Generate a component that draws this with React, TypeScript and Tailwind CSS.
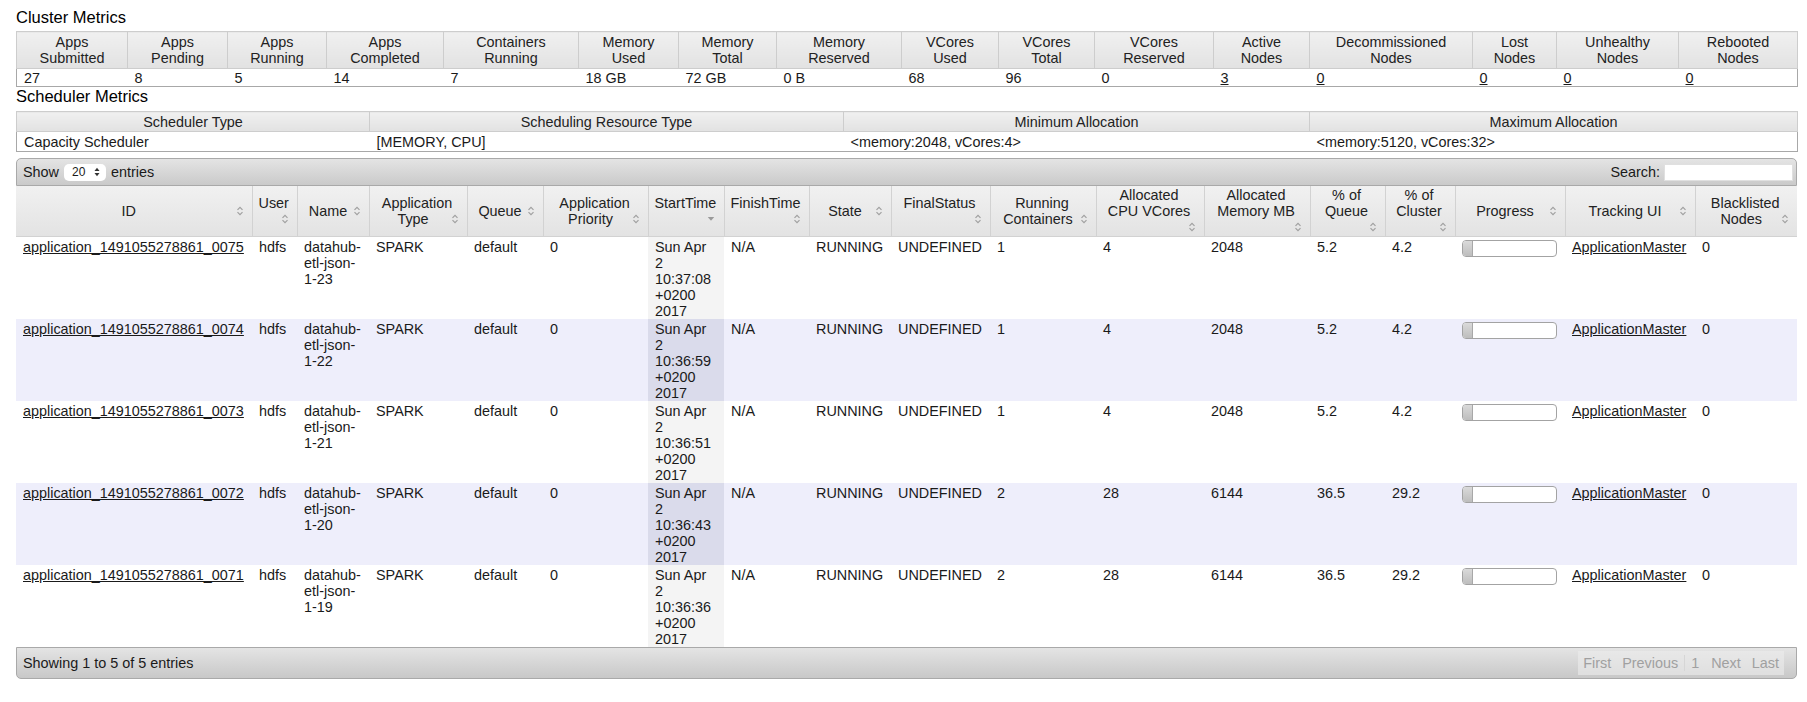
import React from "react";

type ClusterCol = { h: [string, string]; v: string; w: string; link?: boolean };

const clusterCols: ClusterCol[] = [
  { h: ["Apps", "Submitted"], v: "27", w: "w-[111px]" },
  { h: ["Apps", "Pending"], v: "8", w: "w-[100px]" },
  { h: ["Apps", "Running"], v: "5", w: "w-[99px]" },
  { h: ["Apps", "Completed"], v: "14", w: "w-[117px]" },
  { h: ["Containers", "Running"], v: "7", w: "w-[135px]" },
  { h: ["Memory", "Used"], v: "18 GB", w: "w-[100px]" },
  { h: ["Memory", "Total"], v: "72 GB", w: "w-[98px]" },
  { h: ["Memory", "Reserved"], v: "0 B", w: "w-[125px]" },
  { h: ["VCores", "Used"], v: "68", w: "w-[97px]" },
  { h: ["VCores", "Total"], v: "96", w: "w-[96px]" },
  { h: ["VCores", "Reserved"], v: "0", w: "w-[119px]" },
  { h: ["Active", "Nodes"], v: "3", w: "w-[96px]", link: true },
  { h: ["Decommissioned", "Nodes"], v: "0", w: "w-[163px]", link: true },
  { h: ["Lost", "Nodes"], v: "0", w: "w-[84px]", link: true },
  { h: ["Unhealthy", "Nodes"], v: "0", w: "w-[122px]", link: true },
  { h: ["Rebooted", "Nodes"], v: "0", w: "w-[119px]", link: true },
];

const schedCols = [
  { h: "Scheduler Type", v: "Capacity Scheduler", w: "w-[353px]" },
  { h: "Scheduling Resource Type", v: "[MEMORY, CPU]", w: "w-[474px]" },
  { h: "Minimum Allocation", v: "<memory:2048, vCores:4>", w: "w-[466px]" },
  { h: "Maximum Allocation", v: "<memory:5120, vCores:32>", w: "w-[488px]" },
];

type Icon = "inline" | "below" | "tri";
type AppCol = { lines: string[]; icon: Icon; w: string };

const appCols: AppCol[] = [
  { lines: ["ID"], icon: "inline", w: "w-[236px]" },
  { lines: ["User"], icon: "below", w: "w-[45px]" },
  { lines: ["Name"], icon: "inline", w: "w-[72px]" },
  { lines: ["Application", "Type"], icon: "inline", w: "w-[98px]" },
  { lines: ["Queue"], icon: "inline", w: "w-[76px]" },
  { lines: ["Application", "Priority"], icon: "inline", w: "w-[105px]" },
  { lines: ["StartTime"], icon: "tri", w: "w-[76px]" },
  { lines: ["FinishTime"], icon: "below", w: "w-[85px]" },
  { lines: ["State"], icon: "inline", w: "w-[82px]" },
  { lines: ["FinalStatus"], icon: "below", w: "w-[99px]" },
  { lines: ["Running", "Containers"], icon: "inline", w: "w-[106px]" },
  { lines: ["Allocated", "CPU VCores"], icon: "below", w: "w-[108px]" },
  { lines: ["Allocated", "Memory MB"], icon: "below", w: "w-[106px]" },
  { lines: ["% of", "Queue"], icon: "below", w: "w-[75px]" },
  { lines: ["% of", "Cluster"], icon: "below", w: "w-[70px]" },
  { lines: ["Progress"], icon: "inline", w: "w-[110px]" },
  { lines: ["Tracking UI"], icon: "inline", w: "w-[130px]" },
  { lines: ["Blacklisted", "Nodes"], icon: "inline", w: "w-[102px]" },
];

type AppRow = {
  id: string;
  name: string[];
  start: string[];
  rc: string;
  cpu: string;
  mem: string;
  pq: string;
  pc: string;
};

const rows: AppRow[] = [
  { id: "application_1491055278861_0075", name: ["datahub-", "etl-json-", "1-23"], start: ["Sun Apr", "2", "10:37:08", "+0200", "2017"], rc: "1", cpu: "4", mem: "2048", pq: "5.2", pc: "4.2" },
  { id: "application_1491055278861_0074", name: ["datahub-", "etl-json-", "1-22"], start: ["Sun Apr", "2", "10:36:59", "+0200", "2017"], rc: "1", cpu: "4", mem: "2048", pq: "5.2", pc: "4.2" },
  { id: "application_1491055278861_0073", name: ["datahub-", "etl-json-", "1-21"], start: ["Sun Apr", "2", "10:36:51", "+0200", "2017"], rc: "1", cpu: "4", mem: "2048", pq: "5.2", pc: "4.2" },
  { id: "application_1491055278861_0072", name: ["datahub-", "etl-json-", "1-20"], start: ["Sun Apr", "2", "10:36:43", "+0200", "2017"], rc: "2", cpu: "28", mem: "6144", pq: "36.5", pc: "29.2" },
  { id: "application_1491055278861_0071", name: ["datahub-", "etl-json-", "1-19"], start: ["Sun Apr", "2", "10:36:36", "+0200", "2017"], rc: "2", cpu: "28", mem: "6144", pq: "36.5", pc: "29.2" },
];

function SortIcon() {
  return (
    <svg width="8" height="12" viewBox="0 0 8 12" className="block">
      <path d="M1.5 4.8 L4 2.3 L6.5 4.8" fill="none" stroke="#a0a0a0" strokeWidth="1.2" />
      <path d="M1.5 7.2 L4 9.7 L6.5 7.2" fill="none" stroke="#a0a0a0" strokeWidth="1.2" />
    </svg>
  );
}

function TriIcon() {
  return (
    <svg width="8" height="6" viewBox="0 0 8 6" className="block">
      <path d="M0.8 1 L7.2 1 L4 4.8 Z" fill="#9a9a9a" />
    </svg>
  );
}

function SelectArrows() {
  return (
    <svg width="6" height="10" viewBox="0 0 6 10" className="block">
      <path d="M0.5 4 L3 0.8 L5.5 4 Z" fill="#333" />
      <path d="M0.5 6 L3 9.2 L5.5 6 Z" fill="#333" />
    </svg>
  );
}

function HeaderCell({ col }: { col: AppCol }) {
  const last = col.lines.length - 1;
  return (
    <th className="font-normal align-middle pl-[6px] pr-[8px] py-[1px] border-r border-[#d2d2d2] last:border-r-0 text-[#222]">
      {col.lines.map((l, i) =>
        i === last && col.icon === "inline" ? (
          <div key={i} className="text-center whitespace-nowrap">
            <span className="float-right flex h-[16px] items-center">
              <SortIcon />
            </span>
            {l}
          </div>
        ) : (
          <div key={i} className="text-center whitespace-nowrap">
            {l}
          </div>
        )
      )}
      {col.icon === "below" && (
        <div className="flex h-[16px] items-center justify-end">
          <SortIcon />
        </div>
      )}
      {col.icon === "tri" && (
        <div className="flex h-[16px] items-center justify-end pr-[1px]">
          <TriIcon />
        </div>
      )}
    </th>
  );
}

function Progress() {
  return (
    <div className="mt-[1px] flex h-[17px] w-[95px] overflow-hidden rounded-[4px] border border-[#a3a3a3] bg-white">
      <div className="h-full w-[10px] border-r border-[#a8a8a8] bg-linear-to-b from-[#dadada] to-[#bdbdbd]" />
    </div>
  );
}

export default function App() {
  return (
    <div className="min-h-[702px] bg-white pl-[16px] pr-[10px] pt-[8px] font-['Liberation_Sans',Arial,Helvetica,sans-serif] text-[14.4px] leading-[16px] text-[#1a1a1a]">
      <div className="mb-[4px] text-[16.5px] leading-[19px] text-black">Cluster Metrics</div>
      <table className="w-full table-fixed border-collapse">
        <colgroup>
          {clusterCols.map((c, i) => (
            <col key={i} className={c.w} />
          ))}
        </colgroup>
        <thead>
          <tr>
            {clusterCols.map((c, i) => (
              <th
                key={i}
                className="border border-[#cdcdcd] bg-linear-to-b from-[#f0f0f0] to-[#e2e2e2] px-[3px] py-[2px] text-center font-normal text-[#222]"
              >
                <div className="whitespace-nowrap">{c.h[0]}</div>
                <div className="whitespace-nowrap">{c.h[1]}</div>
              </th>
            ))}
          </tr>
        </thead>
        <tbody>
          <tr>
            {clusterCols.map((c, i) => (
              <td
                key={i}
                className="h-[18px] border-b border-[#a8a8a8] px-[7px] py-0 text-left first:border-l last:border-r"
              >
                {c.link ? <span className="underline">{c.v}</span> : c.v}
              </td>
            ))}
          </tr>
        </tbody>
      </table>

      <div className="mb-[5px] text-[16.5px] leading-[19px] text-black">Scheduler Metrics</div>
      <table className="w-full table-fixed border-collapse">
        <colgroup>
          {schedCols.map((c, i) => (
            <col key={i} className={c.w} />
          ))}
        </colgroup>
        <thead>
          <tr>
            {schedCols.map((c, i) => (
              <th
                key={i}
                className="h-[20px] border border-[#cdcdcd] bg-linear-to-b from-[#f0f0f0] to-[#e2e2e2] px-[3px] py-[1px] text-center font-normal text-[#222]"
              >
                {c.h}
              </th>
            ))}
          </tr>
        </thead>
        <tbody>
          <tr>
            {schedCols.map((c, i) => (
              <td
                key={i}
                className="h-[20px] border-b border-[#a8a8a8] px-[7px] py-0 text-left first:border-l last:border-r"
              >
                {c.v}
              </td>
            ))}
          </tr>
        </tbody>
      </table>

      <div className="mt-[6px] flex h-[28px] items-center justify-between rounded-t-[5px] border border-[#a9a9a9] bg-linear-to-b from-[#e4e4e4] to-[#cacaca] pl-[6px] pr-[3px]">
        <div className="flex items-center">
          <span>Show</span>
          <span className="mx-[5px] flex h-[17px] w-[42px] items-center justify-between rounded-[5px] bg-white pl-[8px] pr-[6px] text-[12px] leading-[14px]">
            <span>20</span>
            <SelectArrows />
          </span>
          <span>entries</span>
        </div>
        <div className="flex items-center">
          <span>Search:</span>
          <span className="ml-[4px] h-[17px] w-[129px] border border-[#e0e0e0] bg-white" />
        </div>
      </div>

      <table className="w-full table-fixed border-collapse">
        <colgroup>
          {appCols.map((c, i) => (
            <col key={i} className={c.w} />
          ))}
        </colgroup>
        <thead>
          <tr className="h-[50px] bg-linear-to-b from-[#f1f1f1] to-[#e3e3e3] border-b border-[#d2d2d2]">
            {appCols.map((c, i) => (
              <HeaderCell key={i} col={c} />
            ))}
          </tr>
        </thead>
        <tbody>
          {rows.map((r, i) => {
            const odd = i % 2 === 1;
            const td = "align-top px-[7px] pt-[2px] pb-0 text-left whitespace-nowrap";
            return (
              <tr key={i} className={odd ? "h-[82px] bg-[#eeeefb]" : "h-[82px] bg-white"}>
                <td className={td}>
                  <span className="underline">{r.id}</span>
                </td>
                <td className={td}>hdfs</td>
                <td className={td}>
                  {r.name.map((n, j) => (
                    <div key={j}>{n}</div>
                  ))}
                </td>
                <td className={td}>SPARK</td>
                <td className={td}>default</td>
                <td className={td}>0</td>
                <td className={odd ? td + " bg-[#dadbeb]" : td + " bg-[#f4f4f4]"}>
                  {r.start.map((s, j) => (
                    <div key={j}>{s}</div>
                  ))}
                </td>
                <td className={td}>N/A</td>
                <td className={td}>RUNNING</td>
                <td className={td}>UNDEFINED</td>
                <td className={td}>{r.rc}</td>
                <td className={td}>{r.cpu}</td>
                <td className={td}>{r.mem}</td>
                <td className={td}>{r.pq}</td>
                <td className={td}>{r.pc}</td>
                <td className={td}>
                  <Progress />
                </td>
                <td className={td}>
                  <span className="underline">ApplicationMaster</span>
                </td>
                <td className={td}>0</td>
              </tr>
            );
          })}
        </tbody>
      </table>

      <div className="flex h-[32px] items-center justify-between rounded-b-[5px] border border-[#a9a9a9] bg-linear-to-b from-[#e4e4e4] to-[#c8c8c8] pl-[6px] pr-[12px]">
        <span>Showing 1 to 5 of 5 entries</span>
        <div className="flex h-[24px] items-center bg-[#ececec]/60 text-[#a0a0a0]">
          <span className="px-[5px]">First</span>
          <span className="border-r border-[#d6d6d6] px-[6px]">Previous</span>
          <span className="px-[6px]">1</span>
          <span className="px-[6px]">Next</span>
          <span className="px-[5px]">Last</span>
        </div>
      </div>
    </div>
  );
}
